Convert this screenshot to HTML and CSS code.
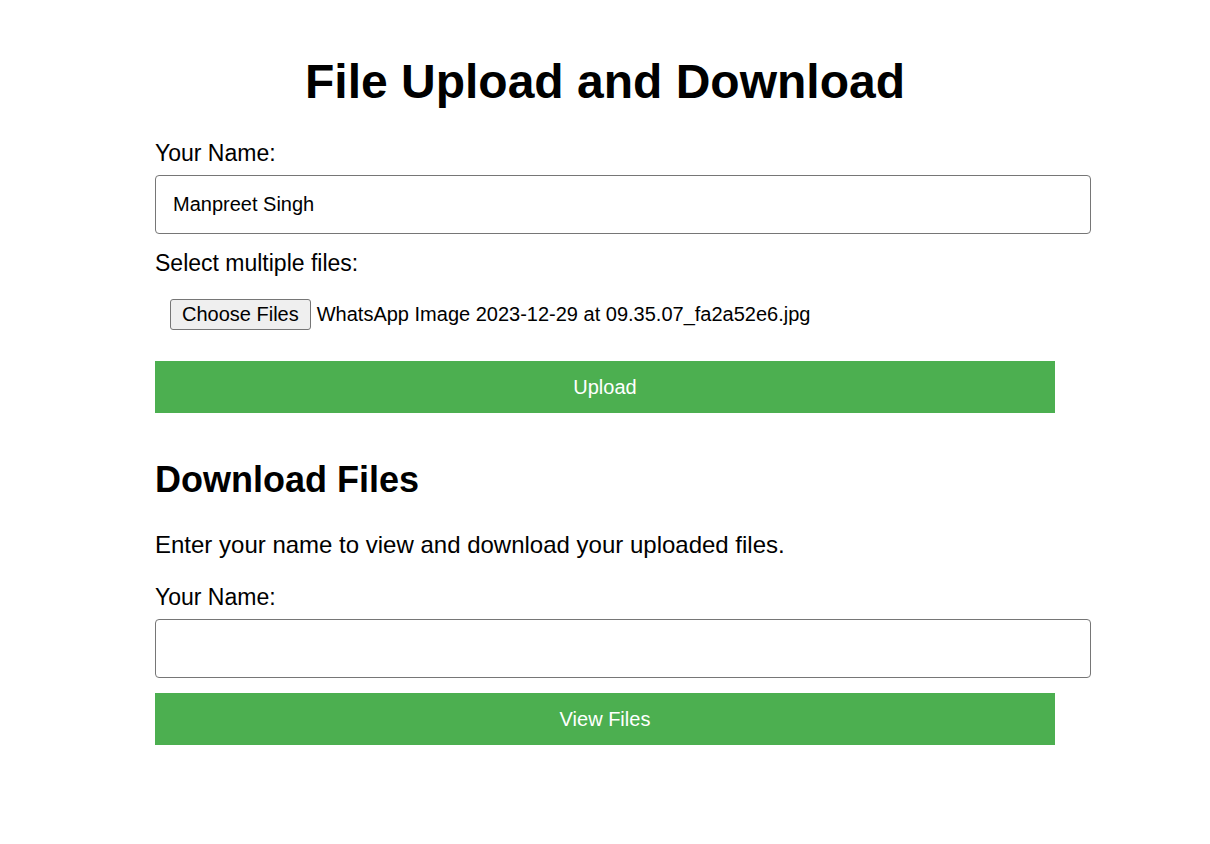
FILE: index.html
```html
<!DOCTYPE html>
<html lang="en">
<head>
<meta charset="utf-8">
<title>File Upload and Download</title>
<link rel="stylesheet" href="styles.css">
</head>
<body>
<div class="container">
  <h1 class="title">File Upload and Download</h1>
  <form class="upload-form">
    <label class="field-label" for="name1">Your Name:</label>
    <input class="text-input" id="name1" type="text" value="Manpreet Singh">
    <label class="field-label file-label">Select multiple files:</label>
    <div class="file-picker">
      <span class="file-button">Choose Files</span>
      <span class="file-name">WhatsApp Image 2023-12-29 at 09.35.07_fa2a52e6.jpg</span>
    </div>
    <button class="green-button" type="button">Upload</button>
  </form>
  <h2 class="section-title">Download Files</h2>
  <p class="section-text">Enter your name to view and download your uploaded files.</p>
  <form class="download-form">
    <label class="field-label" for="name2">Your Name:</label>
    <input class="text-input" id="name2" type="text">
    <button class="green-button" type="button">View Files</button>
  </form>
</div>
</body>
</html>
```
FILE: styles.css
```css
html, body {
  margin: 0;
  padding: 0;
  background: #ffffff;
}

body {
  font-family: "Liberation Sans", Arial, sans-serif;
  color: #000000;
}

.container {
  width: 900px;
  margin: 0 auto;
  padding-top: 54px;
}

.title {
  font-size: 48px;
  line-height: 55px;
  font-weight: bold;
  text-align: center;
  margin: 0 0 31px;
}

.upload-form,
.download-form {
  margin: 0;
}

.field-label {
  display: block;
  font-size: 23px;
  line-height: 26px;
  margin-bottom: 9px;
}

.file-label {
  padding-top: 1px;
}

.text-input {
  display: block;
  box-sizing: content-box;
  width: 900px;
  padding: 17px;
  border: 1px solid #767676;
  border-radius: 4px;
  font-family: "Liberation Sans", Arial, sans-serif;
  font-size: 20px;
  line-height: 23px;
  height: 23px;
  color: #000000;
  margin: 0 0 15px;
  outline: none;
}

.file-picker {
  display: flex;
  align-items: center;
  padding: 14px 15px 15px;
  margin-bottom: 16px;
  font-size: 20px;
  line-height: 23px;
}

.file-button {
  display: inline-block;
  padding: 3px 11px;
  border: 1px solid #767676;
  border-radius: 3px;
  background: #efefef;
  color: #000000;
}

.file-name {
  margin-left: 6px;
}

.green-button {
  display: block;
  width: 900px;
  height: 52px;
  padding: 0;
  border: none;
  background: #4caf50;
  color: #ffffff;
  font-family: "Liberation Sans", Arial, sans-serif;
  font-size: 20px;
  line-height: 52px;
  text-align: center;
  cursor: pointer;
}

.section-title {
  font-size: 36px;
  line-height: 41px;
  font-weight: bold;
  margin: 46px 0 31px;
}

.section-text {
  font-size: 24px;
  line-height: 28px;
  margin: 0 0 25px;
}
```
